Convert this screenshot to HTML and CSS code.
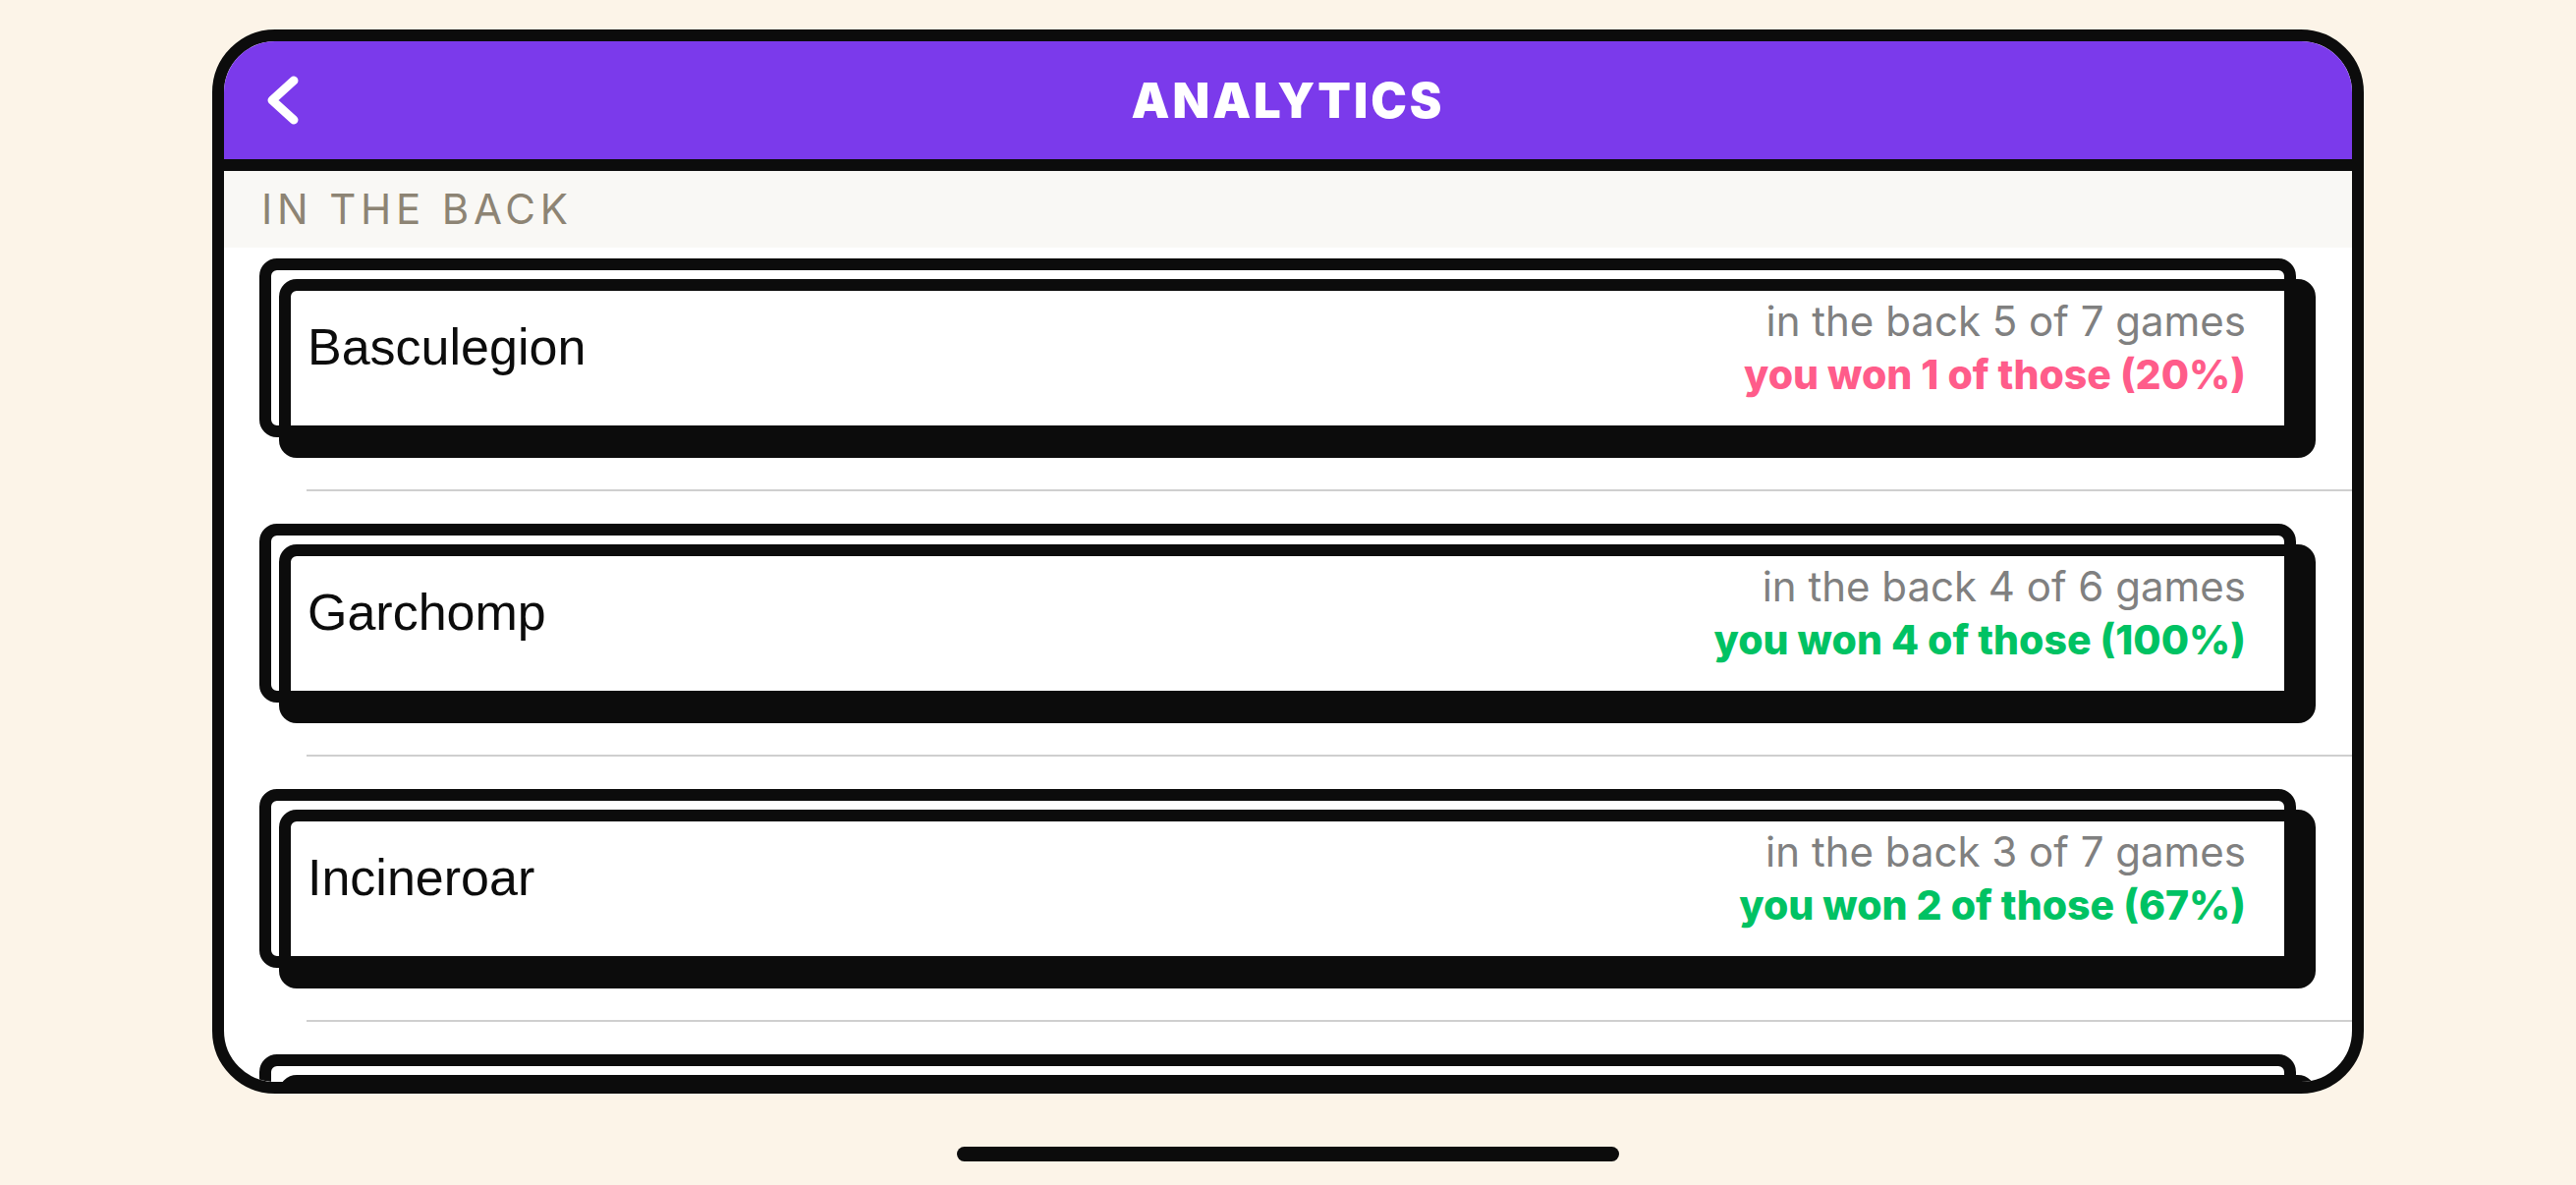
FILE: index.html
```html
<!DOCTYPE html>
<html lang="en">
<head>
<meta charset="utf-8">
<title>Analytics</title>
<link rel="stylesheet" href="styles.css">
</head>
<body>
<div class="device">
  <header class="topbar">
    <button class="back" aria-label="Back">
      <svg width="32" height="50" viewBox="0 0 32 50"><path d="M27 5 L5 25 L27 45" fill="none" stroke="#fff" stroke-width="9" stroke-linecap="round" stroke-linejoin="round"/></svg>
    </button>
    <h1 class="title">ANALYTICS</h1>
    <span class="spacer"></span>
  </header>
  <div class="section">IN THE BACK</div>
  <ul class="list">
    <li class="row">
      <div class="card">
        <div class="card-back"></div>
        <div class="face">
          <span class="name">Basculegion</span>
          <div class="stats">
            <span class="stat-line">in the back 5 of 7 games</span>
            <span class="stat-line won bad">you won 1 of those (20%)</span>
          </div>
        </div>
      </div>
    </li>
    <li class="row">
      <div class="card">
        <div class="card-back"></div>
        <div class="face">
          <span class="name">Garchomp</span>
          <div class="stats">
            <span class="stat-line">in the back 4 of 6 games</span>
            <span class="stat-line won good">you won 4 of those (100%)</span>
          </div>
        </div>
      </div>
    </li>
    <li class="row">
      <div class="card">
        <div class="card-back"></div>
        <div class="face">
          <span class="name">Incineroar</span>
          <div class="stats">
            <span class="stat-line">in the back 3 of 7 games</span>
            <span class="stat-line won good">you won 2 of those (67%)</span>
          </div>
        </div>
      </div>
    </li>
    <li class="row">
      <div class="card">
        <div class="card-back"></div>
        <div class="face"></div>
      </div>
    </li>
  </ul>
</div>
<div class="home-indicator"></div>
</body>
</html>
```

FILE: styles.css
```css
* { box-sizing: border-box; }

html, body {
  margin: 0;
  padding: 0;
}

body {
  background: #fcf4e8;
  font-family: "Inter", "Liberation Sans", sans-serif;
  padding-top: 30px;
}

.device {
  width: 2190px;
  height: 1083px;
  margin: 0 auto;
  border: 12px solid #0c0c0c;
  border-radius: 64px;
  background: #ffffff;
  overflow: hidden;
  display: flex;
  flex-direction: column;
}

.topbar {
  flex: none;
  height: 132px;
  background: #7b3aeb;
  border-bottom: 12px solid #0c0c0c;
  display: grid;
  grid-template-columns: 1fr auto 1fr;
  align-items: center;
  padding: 0 44px;
}

.back {
  justify-self: start;
  background: none;
  border: 0;
  padding: 0;
  margin: 0;
  width: 32px;
  height: 50px;
  display: flex;
}

.title {
  margin: 0;
  color: #ffffff;
  font-family: "Inter", sans-serif;
  font-weight: 900;
  font-size: 49px;
  letter-spacing: 3px;
  line-height: 1;
}

.section {
  flex: none;
  height: 78px;
  line-height: 78px;
  background: #f9f8f5;
  color: #8d8474;
  font-family: "Inter", sans-serif;
  font-size: 42px;
  letter-spacing: 4.8px;
  padding-left: 38px;
}

.list {
  list-style: none;
  margin: 0;
  padding: 0;
}

.row {
  margin-left: 84px;
  padding: 33px 0 32px 0;
  border-bottom: 2px solid #cfcfcf;
}

.row:first-child {
  padding-top: 11px;
}

.card {
  display: grid;
  margin-left: -48px;
  margin-right: 37px;
}

.card-back,
.face {
  grid-area: 1 / 1;
  height: 182px;
  border-radius: 18px;
}

.card-back {
  margin: 0 20px 21px 0;
  border: 12px solid #0c0c0c;
  background: #ffffff;
}

.face {
  margin: 21px 0 0 20px;
  border-style: solid;
  border-color: #0c0c0c;
  border-width: 12px 32px 33px 12px;
  background: #ffffff;
  display: flex;
  justify-content: space-between;
  align-items: flex-start;
  padding: 0 39px 0 17px;
}

.name {
  font-family: "Liberation Sans", "Inter", sans-serif;
  font-size: 52px;
  line-height: 60px;
  color: #0c0c0c;
  margin-top: 27px;
}

.stats {
  display: flex;
  flex-direction: column;
  align-items: flex-end;
  margin-top: 4px;
}

.stat-line {
  font-size: 42px;
  line-height: 54px;
  color: #808080;
  white-space: nowrap;
}

.won {
  font-size: 41px;
  font-weight: 800;
}

.bad { color: #ff5c8a; }
.good { color: #00c263; }

.home-indicator {
  width: 674px;
  height: 15px;
  margin: 54px auto 0;
  border-radius: 8px;
  background: #0c0c0c;
}
```
